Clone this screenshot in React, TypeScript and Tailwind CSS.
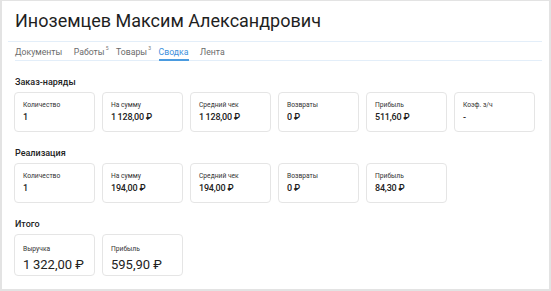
import React from "react";

type Item = { label: string; value: string };

const orders: Item[] = [
  { label: "Количество", value: "1" },
  { label: "На сумму", value: "1\u2009128,00 ₽" },
  { label: "Средний чек", value: "1\u2009128,00 ₽" },
  { label: "Возвраты", value: "0 ₽" },
  { label: "Прибыль", value: "511,60 ₽" },
  { label: "Коэф. з/ч", value: "-" },
];

const sales: Item[] = [
  { label: "Количество", value: "1" },
  { label: "На сумму", value: "194,00 ₽" },
  { label: "Средний чек", value: "194,00 ₽" },
  { label: "Возвраты", value: "0 ₽" },
  { label: "Прибыль", value: "84,30 ₽" },
];

const total: Item[] = [
  { label: "Выручка", value: "1\u2009322,00 ₽" },
  { label: "Прибыль", value: "595,90 ₽" },
];

function Card({ item, big }: { item: Item; big?: boolean }) {
  return (
    <div
      className={
        "w-[81px] rounded-[4px] border border-[#e5e5e5] pl-[8px] " +
        (big ? "h-[42px] pt-[10px]" : "h-[40px] pt-[8px]")
      }
    >
      <div className="text-[6.7px] leading-[9px] text-[#333]">{item.label}</div>
      {big ? (
        <div className="mt-[3px] text-[13px] leading-[15px] text-[#222]">{item.value}</div>
      ) : (
        <div className="mt-[1px] text-[9px] leading-[12px] font-medium tracking-[-0.2px] text-[#222]">{item.value}</div>
      )}
    </div>
  );
}

function Section({ title, items, big, mt }: { title: string; items: Item[]; big?: boolean; mt: string }) {
  return (
    <div className={mt}>
      <div className="pl-[13px] text-[9px] leading-[12px] font-medium text-[#222]">{title}</div>
      <div className="mt-[4px] flex gap-[7px] pl-[12px]">
        {items.map((it, i) => (
          <Card key={i} item={it} big={big} />
        ))}
      </div>
    </div>
  );
}

export default function App() {
  const tabs = [
    { t: "Документы" },
    { t: "Работы", s: "5" },
    { t: "Товары", s: "3" },
    { t: "Сводка", active: true },
    { t: "Лента" },
  ];
  return (
    <div
      className="h-[291px] w-[551px] bg-[#e3e3e3] pl-[2px] pt-[1px]"
      style={{ fontFamily: "Roboto, 'Open Sans', sans-serif" }}
    >
      <div className="h-[288px] w-[547px] bg-white">
        <div className="pl-[13px] pt-[9px] text-[18px] leading-[22px] text-[#1f1f1f]">
          Иноземцев Максим Александрович
        </div>
        <div className="ml-[6px] mr-[7px] mt-[9px] border-b border-[#e3eef9]" />
        <div className="ml-[13px] mr-[7px] flex h-[19px] items-end gap-[11.5px] border-b border-[#e3eef9]">
          {tabs.map((tb, i) => (
            <div
              key={i}
              className={
                "relative -mb-px pb-[1px] text-[8.7px] leading-[12px] " +
                (tb.active ? "border-b-2 border-[#4a9be0] text-[#3d8fdc]" : "border-b-2 border-transparent text-[#6b6b6b]")
              }
            >
              {tb.t}
              {tb.s && (
                <span className="absolute right-[-4px] top-[-1px] text-[5px] leading-[6px] text-[#777]">{tb.s}</span>
              )}
            </div>
          ))}
        </div>
        <Section title="Заказ-наряды" items={orders} mt="mt-[15px]" />
        <Section title="Реализация" items={sales} mt="mt-[15px]" />
        <Section title="Итого" items={total} big mt="mt-[15px]" />
      </div>
    </div>
  );
}
